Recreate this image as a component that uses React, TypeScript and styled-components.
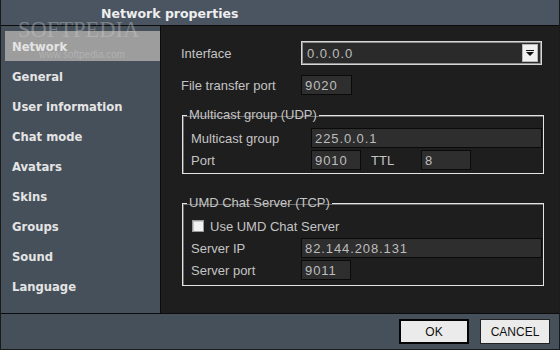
import styled, { createGlobalStyle } from "styled-components";

const GlobalStyle = createGlobalStyle`
  html, body {
    margin: 0;
    padding: 0;
    background: #1e1e1e;
  }
`;

const dots = `
  background-image: radial-gradient(rgba(255, 255, 255, 0.05) 0.6px, transparent 0.7px);
  background-size: 2px 2px;
`;

const Window = styled.div`
  position: relative;
  width: 560px;
  height: 350px;
  box-sizing: border-box;
  border: 1px solid #1a1a1a;
  border-top: none;
  display: flex;
  flex-direction: column;
  background: #46505a;
  font-family: "Liberation Sans", Arial, sans-serif;
  overflow: hidden;
`;

const TitleBar = styled.div`
  border-bottom: 1px solid #0c0c0c;
  background: #4a5561;
  ${dots}
  display: flex;
  align-items: center;
  padding: 1px 0 0 100px;
  box-sizing: border-box;
  height: 26px;
  font-family: "DejaVu Sans", Verdana, sans-serif;
  font-weight: bold;
  font-size: 12.5px;
  color: #eeeeee;
`;

const Body = styled.div`
  display: flex;
  height: 287px;
`;

const Sidebar = styled.nav`
  width: 155px;
  padding: 5px 0 0 4px;
  border-right: 1px solid #0c0c0c;
  background: #46505a;
  ${dots}
  display: flex;
  flex-direction: column;
`;

const NavItem = styled.div<{ $active?: boolean }>`
  height: 30px;
  display: flex;
  align-items: center;
  padding: 1px 0 0 7px;
  box-sizing: border-box;
  font-family: "DejaVu Sans", Verdana, sans-serif;
  font-weight: bold;
  font-size: 11.6px;
  color: #e4e4e4;
  background: ${(p) => (p.$active ? "#9d9d9d" : "transparent")};
`;

const Content = styled.main`
  flex: 1;
  background: #1e1e1e;
  padding: 15px 0 0 20px;
  color: #c4c4c4;
  font-size: 13px;
`;

const Row = styled.div<{ $h?: number; $mt?: number }>`
  display: flex;
  align-items: center;
  height: ${(p) => p.$h ?? 20}px;
  margin-top: ${(p) => p.$mt ?? 0}px;
`;

const Label = styled.div<{ $w: number; $indent?: number }>`
  width: ${(p) => p.$w}px;
  padding-left: ${(p) => p.$indent ?? 0}px;
  box-sizing: border-box;
  flex-shrink: 0;
  color: #c4c4c4;
  font-size: 13px;
`;

const Field = styled.div<{ $w: number }>`
  width: ${(p) => p.$w}px;
  height: 20px;
  box-sizing: border-box;
  border: 1px solid #0a0a0a;
  background-color: #2e2e2e;
  ${dots}
  display: flex;
  align-items: center;
  padding-left: 3px;
  color: #bdbdbd;
  font-size: 13px;
  letter-spacing: 0.9px;
`;

const Select = styled.div`
  width: 241px;
  height: 24px;
  box-sizing: border-box;
  border: 1px solid #d6d6d6;
  box-shadow: inset 0 0 0 1px #8e8e8e;
  background-color: #2a2a2a;
  ${dots}
  display: flex;
  align-items: center;
  justify-content: space-between;
  padding: 0 3px 0 5px;
  color: #bdbdbd;
  font-size: 13px;
  letter-spacing: 0.9px;
`;

const DropButton = styled.div`
  width: 16px;
  height: 18px;
  box-sizing: border-box;
  background: #f0f0f0;
  border: 1px solid #b8b8b8;
  display: flex;
  align-items: center;
  justify-content: center;
`;

const Group = styled.fieldset<{ $mt: number; $h: number }>`
  margin: ${(p) => p.$mt}px 0 0 1px;
  width: 362px;
  height: ${(p) => p.$h}px;
  box-sizing: border-box;
  padding: 0 0 0 8px;
  border: 1px solid #e4e4e4;
  box-shadow: inset 1px 1px 0 #6a6a6a;
  min-width: 0;
`;

const Legend = styled.legend`
  margin-left: -4px;
  padding: 0 2px;
  line-height: 14px;
  font-size: 13px;
  color: #c4c4c4;
`;

const Check = styled.div`
  width: 12px;
  height: 12px;
  box-sizing: border-box;
  border: 1px solid #9a9a9a;
  background: #f2f2f2;
  box-shadow: inset 1px 1px 0 #c8c8c8;
  margin: 0 6px 0 1px;
`;

const Footer = styled.footer`
  flex: 1;
  border-top: 1px solid #0c0c0c;
  background: #46505a;
  ${dots}
  display: flex;
  align-items: center;
  justify-content: flex-end;
  gap: 11px;
  padding: 0 9px 0 0;
`;

const Button = styled.div<{ $default?: boolean }>`
  width: 70px;
  height: 25px;
  box-sizing: border-box;
  border: ${(p) => (p.$default ? "2px solid #050505" : "1px solid #222")};
  background: #ebebeb;
  display: flex;
  align-items: center;
  justify-content: center;
  color: #111;
  font-size: 12px;
`;

const Watermark = styled.div`
  position: absolute;
  left: 17px;
  top: 21px;
  pointer-events: none;
  color: rgba(205, 205, 205, 0.4);
  line-height: 1;
`;

const WmBig = styled.div`
  font-family: "Liberation Serif", serif;
  font-size: 22.5px;
  line-height: 18px;
`;

const WmSmall = styled.div`
  font-family: "Liberation Sans", sans-serif;
  font-size: 10px;
  line-height: 10px;
  margin: 11px 0 0 21px;
  color: rgba(220, 220, 220, 0.35);
`;

const navItems = [
  "Network",
  "General",
  "User information",
  "Chat mode",
  "Avatars",
  "Skins",
  "Groups",
  "Sound",
  "Language",
];

export default function App() {
  return (
    <>
      <GlobalStyle />
      <Window>
        <TitleBar>Network properties</TitleBar>
        <Body>
          <Sidebar>
            {navItems.map((n, i) => (
              <NavItem key={n} $active={i === 0}>
                {n}
              </NavItem>
            ))}
          </Sidebar>
          <Content>
            <Row $h={24}>
              <Label $w={120}>Interface</Label>
              <Select>
                0.0.0.0
                <DropButton>
                  <svg width="8" height="6" viewBox="0 0 8 6">
                    <rect x="0" y="0" width="8" height="1" fill="#111" />
                    <path d="M0 2 H8 L4 6 Z" fill="#111" />
                  </svg>
                </DropButton>
              </Select>
            </Row>
            <Row $mt={10}>
              <Label $w={120}>File transfer port</Label>
              <Field $w={51}>9020</Field>
            </Row>
            <Group $mt={13} $h={66}>
              <Legend>Multicast group (UDP)</Legend>
              <Row $mt={6}>
                <Label $w={120}>Multicast group</Label>
                <Field $w={231}>225.0.0.1</Field>
              </Row>
              <Row $mt={2}>
                <Label $w={120}>Port</Label>
                <Field $w={50}>9010</Field>
                <Label $w={60} $indent={10}>
                  TTL
                </Label>
                <Field $w={50}>8</Field>
              </Row>
            </Group>
            <Group $mt={22} $h={90}>
              <Legend>UMD Chat Server (TCP)</Legend>
              <Row $mt={6}>
                <Check />
                <span>Use UMD Chat Server</span>
              </Row>
              <Row $mt={2}>
                <Label $w={110}>Server IP</Label>
                <Field $w={241}>82.144.208.131</Field>
              </Row>
              <Row $mt={2}>
                <Label $w={110}>Server port</Label>
                <Field $w={50}>9011</Field>
              </Row>
            </Group>
          </Content>
        </Body>
        <Footer>
          <Button $default>OK</Button>
          <Button>CANCEL</Button>
        </Footer>
        <Watermark>
          <WmBig>SOFTPEDIA</WmBig>
          <WmSmall>www.softpedia.com</WmSmall>
        </Watermark>
      </Window>
    </>
  );
}
